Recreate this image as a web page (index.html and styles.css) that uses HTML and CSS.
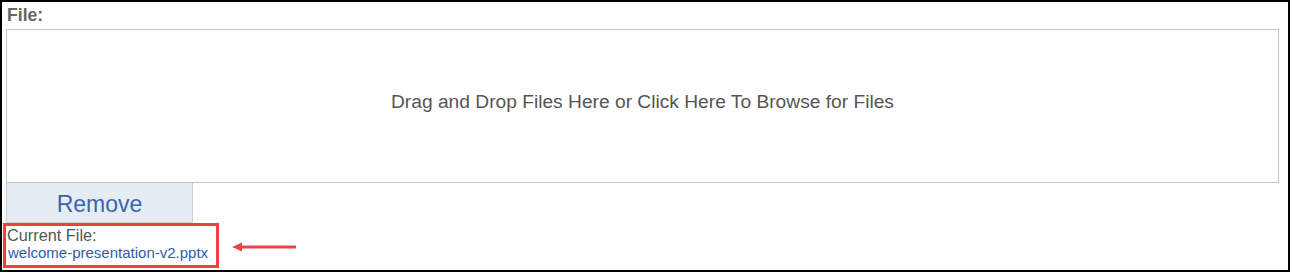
FILE: index.html
```html
<!DOCTYPE html>
<html>
<head>
<meta charset="utf-8">
<link rel="stylesheet" href="styles.css">
</head>
<body>
<div class="frame">
  <div class="label">File:</div>
  <div class="dropzone"><span class="dz-text">Drag and Drop Files Here or Click Here To Browse for Files</span></div>
  <div class="remove">Remove</div>
  <div class="current-row">
    <div class="current">
      <div class="current-label">Current File:</div>
      <a class="current-link" href="#">welcome-presentation-v2.pptx</a>
    </div>
    <svg class="arrow" width="64" height="10" viewBox="0 0 64 10">
      <line x1="8" y1="5" x2="63" y2="5" stroke="#e94545" stroke-width="3" stroke-linecap="round"/>
      <polygon points="0,5 10,0.5 10,9.5" fill="#e94545"/>
    </svg>
  </div>
</div>
</body>
</html>
```
FILE: styles.css
```css
html, body {
  margin: 0;
  padding: 0;
  background: #ffffff;
}
.frame {
  width: 1290px;
  height: 272px;
  box-sizing: border-box;
  border: 2px solid #000;
  padding: 0 9px 0 4px;
  font-family: "Liberation Sans", Arial, sans-serif;
  background: #fff;
}
.label {
  font-size: 17.6px;
  font-weight: bold;
  color: #666666;
  line-height: 20px;
  padding-top: 3px;
  margin-bottom: 4px;
  padding-left: 1px;
}
.dropzone {
  height: 154px;
  box-sizing: border-box;
  border: 1px solid #c4c4c4;
  display: flex;
  align-items: center;
  justify-content: center;
  padding-bottom: 9px;
}
.dz-text {
  font-size: 19.2px;
  color: #555555;
}
.remove {
  width: 187px;
  height: 40px;
  box-sizing: border-box;
  background: #e6ecf4;
  border-left: 1px solid #cbd0d8;
  border-right: 1px solid #cbd0d8;
  border-bottom: 1px solid #cbd0d8;
  padding-top: 3px;
  line-height: 36px;
  text-align: center;
  font-size: 23px;
  color: #3b64ae;
}
.current-row {
  display: flex;
  align-items: center;
  margin-left: -3px;
}
.current {
  border: 3px solid #ee4040;
  padding: 0 8px 4px 1px;
}
.current-label {
  font-size: 16.3px;
  line-height: 18px;
  color: #555555;
}
.current-link {
  display: block;
  font-size: 15px;
  line-height: 17px;
  padding-left: 1px;
  color: #2d5cae;
  text-decoration: none;
}
.arrow {
  margin-left: 13px;
  margin-top: 2px;
}
```
